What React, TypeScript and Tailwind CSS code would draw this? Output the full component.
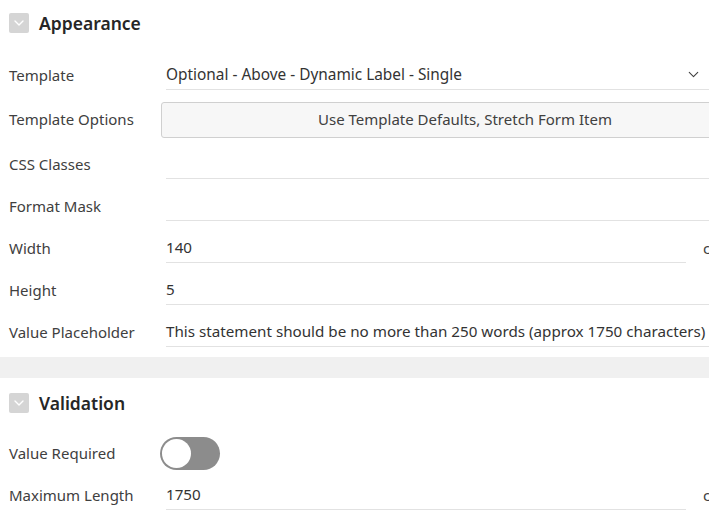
import { ChevronDown } from "lucide-react";

const font = { fontFamily: '"Noto Sans", "Open Sans", sans-serif' };

const SectionHeader = ({ title, top }: { title: string; top: string }) => (
  <div className={`flex items-center gap-[10px] pl-[9px] ${top}`}>
    <span className="flex size-[20px] items-center justify-center rounded-[2px] bg-[#d5d5d5]">
      <ChevronDown className="size-[16px] text-white" strokeWidth={2} />
    </span>
    <span className="text-[17.5px] font-semibold leading-[20px] text-[#262626]">{title}</span>
  </div>
);

const Row = ({
  label,
  h = "h-[42px]",
  children,
}: {
  label: string;
  h?: string;
  children: React.ReactNode;
}) => (
  <div className={`flex items-center ${h}`}>
    <div className="w-[160px] shrink-0 pl-[9px] text-[15px] text-[#404040]">{label}</div>
    <div className="flex min-w-0 flex-1 items-center overflow-hidden">{children}</div>
  </div>
);

const TextField = ({ value = "", unit }: { value?: string; unit?: string }) => (
  <>
    <div
      className={`ml-[6px] flex h-[30px] items-center border-b border-[#e2e2e2] text-[15.2px] text-[#333] whitespace-nowrap ${
        unit ? "w-[520px] shrink-0" : "flex-1"
      }`}
    >
      {value}
    </div>
    {unit && <span className="ml-[17px] shrink-0 text-[15px] text-[#404040]">{unit}</span>}
  </>
);

export default function App() {
  return (
    <div className="h-[512px] w-[709px] overflow-hidden bg-white" style={font}>
      <SectionHeader title="Appearance" top="pt-[13px]" />
      <div className="mt-[21px]">
        <Row label="Template">
          <div className="ml-[6px] flex h-[30px] flex-1 items-center justify-between border-b border-[#e2e2e2] text-[15.4px] text-[#333]">
            <span>Optional - Above - Dynamic Label - Single</span>
            <ChevronDown className="mr-[7px] size-[17px] text-[#404040]" strokeWidth={1.5} />
          </div>
        </Row>
        <Row label="Template Options" h="h-[47px]">
          <div className="ml-[1px] flex h-[36px] w-[608px] shrink-0 items-center justify-center rounded-l-[3px] border border-[#d0d0d0] bg-[#f7f7f7] text-[15px] text-[#404040]">
            Use Template Defaults, Stretch Form Item
          </div>
        </Row>
        <Row label="CSS Classes">
          <TextField />
        </Row>
        <Row label="Format Mask">
          <TextField />
        </Row>
        <Row label="Width">
          <TextField value="140" unit="characters" />
        </Row>
        <Row label="Height">
          <TextField value="5" />
        </Row>
        <Row label="Value Placeholder">
          <TextField value="This statement should be no more than 250 words (approx 1750 characters)" />
        </Row>
      </div>
      <div className="mt-[4px] h-[21px] bg-[#f0f0f0]" />
      <SectionHeader title="Validation" top="pt-[15px]" />
      <div className="mt-[19px]">
        <Row label="Value Required">
          <div className="flex h-[33px] w-[60px] items-center rounded-full bg-[#8c8c8c] p-[2px]">
            <span className="size-[29px] rounded-full bg-white" />
          </div>
        </Row>
        <Row label="Maximum Length">
          <TextField value="1750" unit="characters" />
        </Row>
      </div>
    </div>
  );
}
